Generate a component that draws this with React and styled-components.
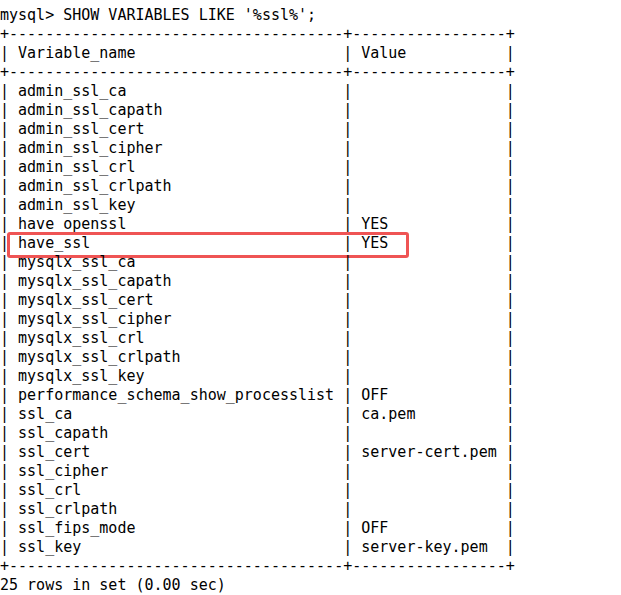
import React from "react"
import styled, { createGlobalStyle } from "styled-components"

const GlobalStyle = createGlobalStyle`
    html, body {
        margin: 0;
        padding: 0;
        background: #ffffff;
    }
`;

const Screen = styled.div`
    padding: 6px 0 0 0;
    font-family: "DejaVu Sans Mono", "Liberation Mono", monospace;
    font-size: 15px;
    line-height: 19px;
    color: #000000;
    white-space: pre;
`;

const Line = styled.div`
    position: relative;
    height: 19px;

    ${(p) => p.$marked && `
        &::after {
            content: "";
            position: absolute;
            left: 7px;
            top: -2px;
            width: 402px;
            height: 26px;
            box-sizing: border-box;
            border: 3px solid #ef5454;
            border-radius: 3px;
        }
    `}
`;

//Dados da consulta
const rows = [
    ["admin_ssl_ca", ""],
    ["admin_ssl_capath", ""],
    ["admin_ssl_cert", ""],
    ["admin_ssl_cipher", ""],
    ["admin_ssl_crl", ""],
    ["admin_ssl_crlpath", ""],
    ["admin_ssl_key", ""],
    ["have_openssl", "YES"],
    ["have_ssl", "YES"],
    ["mysqlx_ssl_ca", ""],
    ["mysqlx_ssl_capath", ""],
    ["mysqlx_ssl_cert", ""],
    ["mysqlx_ssl_cipher", ""],
    ["mysqlx_ssl_crl", ""],
    ["mysqlx_ssl_crlpath", ""],
    ["mysqlx_ssl_key", ""],
    ["performance_schema_show_processlist", "OFF"],
    ["ssl_ca", "ca.pem"],
    ["ssl_capath", ""],
    ["ssl_cert", "server-cert.pem"],
    ["ssl_cipher", ""],
    ["ssl_crl", ""],
    ["ssl_crlpath", ""],
    ["ssl_fips_mode", "OFF"],
    ["ssl_key", "server-key.pem"],
];

const NAME_W = 35;
const VALUE_W = 15;

const border = "+" + "-".repeat(NAME_W + 2) + "+" + "-".repeat(VALUE_W + 2) + "+";
const row = (a, b) => "| " + a.padEnd(NAME_W) + " | " + b.padEnd(VALUE_W) + " |";

export default function App() {
    return (
        <>
            <GlobalStyle />
            <Screen>
                <Line>mysql&gt; SHOW VARIABLES LIKE '%ssl%';</Line>
                <Line>{border}</Line>
                <Line>{row("Variable_name", "Value")}</Line>
                <Line>{border}</Line>
                {rows.map(([name, value]) => (
                    <Line key={name} $marked={name === "have_ssl"}>
                        {row(name, value)}
                    </Line>
                ))}
                <Line>{border}</Line>
                <Line>25 rows in set (0.00 sec)</Line>
            </Screen>
        </>
    );
}
